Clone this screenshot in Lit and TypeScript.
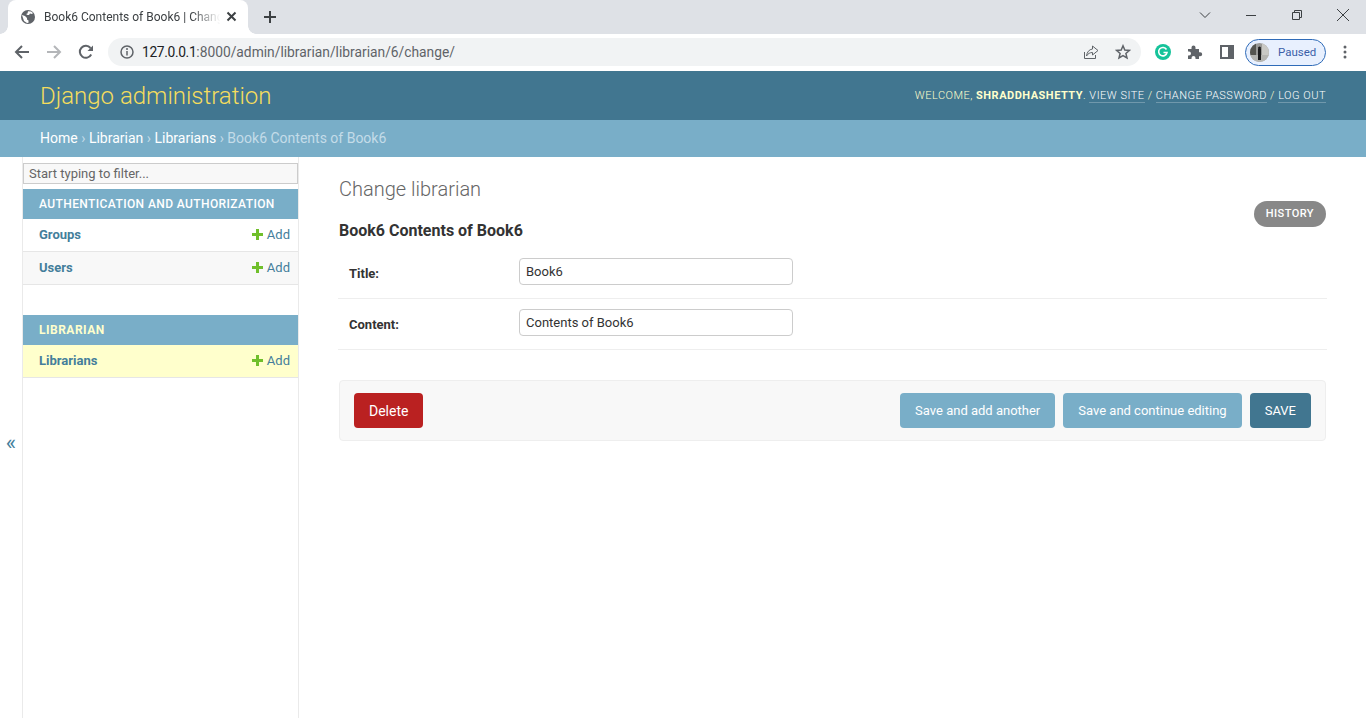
import { LitElement, html, css } from "lit";
import { customElement } from "lit/decorators.js";

@customElement("browser-chrome")
export class BrowserChrome extends LitElement {
  static styles = css`
    :host {
      display: block;
      font-family: Roboto, "Open Sans", sans-serif;
      color: #3c4043;
    }

    .tabs {
      height: 34px;
      background: #dee1e6;
      display: flex;
      align-items: flex-end;
    }

    .tab {
      position: relative;
      width: 240px;
      height: 34px;
      margin-left: 8px;
      box-sizing: border-box;
      background: #fff;
      border-radius: 8px 8px 0 0;
      display: flex;
      align-items: center;
      padding: 0 8px 1px 12px;
      font-size: 12px;
    }

    /* little flares at the foot of the active tab */
    .tab::before,
    .tab::after {
      content: "";
      position: absolute;
      bottom: 0;
      width: 8px;
      height: 8px;
    }

    .tab::before {
      left: -8px;
      background: radial-gradient(circle at 0 0, transparent 7.5px, #fff 8px);
    }

    .tab::after {
      right: -8px;
      background: radial-gradient(circle at 100% 0, transparent 7.5px, #fff 8px);
    }

    .tab svg {
      flex: none;
    }

    .tab-title {
      flex: 1;
      min-width: 0;
      margin-left: 8px;
      white-space: nowrap;
      overflow: hidden;
      -webkit-mask-image: linear-gradient(to right, #000 82%, transparent 98%);
      mask-image: linear-gradient(to right, #000 82%, transparent 98%);
    }

    .new-tab {
      margin: 0 0 1px 14px;
      height: 33px;
      display: flex;
      align-items: center;
    }

    .win {
      margin-left: auto;
      height: 34px;
      display: flex;
      align-items: center;
    }

    .win svg {
      display: block;
    }

    .win-btn {
      width: 46px;
      display: flex;
      justify-content: center;
      margin-bottom: 5px;
    }

    .toolbar {
      height: 37px;
      background: #fff;
      display: flex;
      align-items: center;
      padding: 0 0 1px 0;
      box-sizing: border-box;
    }

    .nav {
      width: 32px;
      display: flex;
      justify-content: center;
    }

    .nav:first-child {
      margin-left: 6px;
    }

    .omnibox {
      width: 1033px;
      height: 28px;
      margin-left: 6px;
      background: #f1f3f4;
      border-radius: 14px;
      display: flex;
      align-items: center;
      padding: 0 10px 0 11px;
      box-sizing: border-box;
      font-size: 13.8px;
      color: #5f6368;
    }

    .url {
      margin-left: 7px;
      flex: 1;
    }

    .url b {
      font-weight: 400;
      letter-spacing: -0.35px;
      color: #202124;
    }

    .omni-icon {
      margin-left: 16px;
      display: flex;
    }

    .ext {
      display: flex;
      margin-left: 14px;
    }

    .ext.next {
      margin-left: 16px;
    }

    .profile {
      margin-left: 10px;
      width: 81px;
      height: 27px;
      box-sizing: border-box;
      border: 1px solid #2f6bb8;
      border-radius: 14px;
      background: #e8f0fe;
      display: flex;
      align-items: center;
      padding-left: 4px;
      font-size: 11.5px;
      color: #3b5fa8;
    }

    .avatar {
      width: 19px;
      height: 19px;
      border-radius: 50%;
      flex: none;
      display: block;
      margin-right: 9px;
    }

    .menu {
      margin-left: 17px;
      display: flex;
    }
  `;

  render() {
    return html`
      <div class="tabs">
        <div class="tab">
          <svg width="16" height="16" viewBox="0 0 16 16">
            <circle cx="8" cy="8" r="7" fill="#5f6368" />
            <path
              d="M2 6l3 1 2 2v1.500l1.500 1v2.200L7 14 4 12l-1-3zM8 2.200l3 .3 2 1.500-1 1-2-.5-1 1.500H7.500L6 5l1.500-.5z"
              fill="#fff"
            />
          </svg>
          <span class="tab-title">Book6 Contents of Book6 | Change librarian</span>
          <svg width="16" height="16" viewBox="0 0 16 16">
            <path d="M3.500 3.500l8 8M11.500 3.500l-8 8" stroke="#3c4043" stroke-width="2" fill="none" />
          </svg>
        </div>
        <div class="new-tab">
          <svg width="16" height="16" viewBox="0 0 16 16">
            <path d="M8 2v12M2 8h12" stroke="#3c4043" stroke-width="2" fill="none" />
          </svg>
        </div>
        <div class="win">
          <div class="win-btn">
            <svg width="12" height="12" viewBox="0 0 12 12">
              <path d="M1 3.500l5 5 5-5" stroke="#3c4043" fill="none" />
            </svg>
          </div>
          <div class="win-btn">
            <svg width="12" height="12" viewBox="0 0 12 12">
              <path d="M1 6.500h10" stroke="#3c4043" fill="none" />
            </svg>
          </div>
          <div class="win-btn">
            <svg width="12" height="12" viewBox="0 0 12 12">
              <path d="M1.500 3.500h7v7h-7zM3.500 3.500v-2h7v7h-2" stroke="#3c4043" fill="none" />
            </svg>
          </div>
          <div class="win-btn">
            <svg width="14" height="14" viewBox="0 0 14 14">
              <path d="M1 1l12 12M13 1L1 13" stroke="#3c4043" fill="none" />
            </svg>
          </div>
        </div>
      </div>
      <div class="toolbar">
        <div class="nav">
          <svg width="16" height="16" viewBox="0 0 16 16">
            <path d="M15 8H2M8 2L2 8l6 6" stroke="#5f6368" stroke-width="2" fill="none" />
          </svg>
        </div>
        <div class="nav">
          <svg width="16" height="16" viewBox="0 0 16 16">
            <path d="M1 8h13M8 2l6 6-6 6" stroke="#b4b6b9" stroke-width="2" fill="none" />
          </svg>
        </div>
        <div class="nav">
          <svg width="16" height="16" viewBox="0 0 16 16">
            <path d="M13.200 10.500A6 6 0 1 1 12.500 4" stroke="#5f6368" stroke-width="2" fill="none" />
            <path d="M15 1.500V7H9.500z" fill="#5f6368" />
          </svg>
        </div>
        <div class="omnibox">
          <svg width="16" height="16" viewBox="0 0 16 16">
            <circle cx="8" cy="8" r="6" stroke="#5f6368" stroke-width="1.500" fill="none" />
            <path d="M8 7v4.500" stroke="#5f6368" stroke-width="1.500" />
            <circle cx="8" cy="5" r="1" fill="#5f6368" />
          </svg>
          <span class="url"><b>127.0.0.1</b>:8000/admin/librarian/librarian/6/change/</span>
          <span class="omni-icon">
            <svg width="16" height="16" viewBox="0 0 16 16">
              <path d="M1.500 8v6.500h11V11" stroke="#5f6368" fill="none" />
              <path d="M9.500 2l5.500 4.500-5.500 4.500V8.500C7 8.500 5 9.500 3.500 12c.5-4 2.500-6.500 6-7z" stroke="#5f6368" fill="none" />
            </svg>
          </span>
          <span class="omni-icon">
            <svg width="16" height="16" viewBox="0 0 16 16">
              <path
                d="M8 1.800l1.800 4.200 4.600.4-3.500 3 1.100 4.500L8 11.500l-4 2.400 1.100-4.500-3.500-3 4.600-.4z"
                stroke="#5f6368"
                stroke-width="1.500"
                fill="none"
              />
            </svg>
          </span>
        </div>
        <span class="ext">
          <svg width="16" height="16" viewBox="0 0 16 16">
            <circle cx="8" cy="8" r="8" fill="#15c39a" />
            <path d="M11.500 5.500A4.200 4.200 0 1 0 12 8.500H8.500" stroke="#fff" stroke-width="1.600" fill="none" />
          </svg>
        </span>
        <span class="ext next">
          <svg width="16" height="16" viewBox="0 0 16 16">
            <path
              d="M1 5h3.500V3.500a2 2 0 0 1 4 0V5H12v3.300h1.200a2 2 0 0 1 0 4H12V15H8.500v-1a2 2 0 0 0-4 0v1H1v-3.500h1a2 2 0 0 0 0-4H1z"
              fill="#5f6368"
            />
          </svg>
        </span>
        <span class="ext next">
          <svg width="16" height="16" viewBox="0 0 16 16">
            <path d="M2 2h12v12H2z" fill="none" stroke="#5f6368" stroke-width="2" />
            <path d="M9 2h5v12H9z" fill="#5f6368" />
          </svg>
        </span>
        <div class="profile">
          <svg class="avatar" viewBox="0 0 19 19">
            <rect width="19" height="19" fill="#9a9a97" />
            <rect x="12" width="7" height="19" fill="#c9c9c5" />
            <rect width="6" height="12" fill="#55554f" />
            <rect y="12" width="19" height="7" fill="#b5b5b1" />
            <circle cx="9.500" cy="5" r="1.500" fill="#1d1d1d" />
            <rect x="8" y="6" width="3" height="11" fill="#1d1d1d" />
          </svg>
          Paused
        </div>
        <span class="menu">
          <svg width="4" height="14" viewBox="0 0 4 14">
            <circle cx="2" cy="2" r="1.500" fill="#5f6368" />
            <circle cx="2" cy="7" r="1.500" fill="#5f6368" />
            <circle cx="2" cy="12" r="1.500" fill="#5f6368" />
          </svg>
        </span>
      </div>
    `;
  }
}

@customElement("app-root")
export class AppRoot extends LitElement {
  static styles = css`
    :host {
      display: block;
      height: 718px;
      overflow: hidden;
      background: #fff;
      font-family: Roboto, "Open Sans", sans-serif;
      font-size: 14px;
      color: #333;
    }

    a {
      text-decoration: none;
      color: inherit;
    }

    .header {
      height: 49px;
      background: #417690;
      display: flex;
      align-items: center;
      justify-content: space-between;
      padding: 0 40px;
    }

    .brand {
      font-size: 24px;
      font-weight: 300;
      color: #f5dd5d;
    }

    .tools {
      font-size: 11px;
      font-weight: 300;
      letter-spacing: 0.5px;
      color: #ffc;
      text-transform: uppercase;
      padding-bottom: 1px;
    }

    .tools strong {
      font-weight: 700;
    }

    .tools a {
      color: #fff;
      border-bottom: 1px solid rgba(255, 255, 255, 0.25);
    }

    .crumbs {
      height: 37px;
      box-sizing: border-box;
      background: #79aec8;
      padding: 0 40px 2px;
      display: flex;
      align-items: center;
      gap: 3.5px;
      color: #c4dce8;
      font-size: 14px;
      white-space: pre;
    }

    .crumbs a {
      color: #fff;
    }

    .main {
      display: flex;
      height: 561px;
    }

    .toggle {
      width: 23px;
      box-sizing: border-box;
      border-right: 1px solid #eaeaea;
      display: flex;
      align-items: center;
      justify-content: center;
      color: #447e9b;
      font-size: 22px;
      padding-top: 10px;
      flex: none;
    }

    .side {
      width: 276px;
      box-sizing: border-box;
      border-right: 1px solid #eaeaea;
      padding-top: 6px;
      flex: none;
    }

    .filter {
      display: block;
      width: 275px;
      height: 21px;
      box-sizing: border-box;
      border: 1px solid #ccc;
      background: #f8f8f8;
      padding: 0 5px;
      margin-bottom: 5px;
      font: 13px Roboto, sans-serif;
      line-height: 19px;
      color: #666;
    }

    .module {
      margin-bottom: 30px;
    }

    .caption {
      height: 30px;
      box-sizing: border-box;
      background: #79aec8;
      display: flex;
      align-items: center;
      padding: 0 16px 1px;
      font-size: 12px;
      font-weight: 500;
      letter-spacing: 0.4px;
      color: #fff;
      white-space: nowrap;
    }

    .caption.here {
      font-weight: 700;
      letter-spacing: 0.5px;
      color: #ffc;
    }

    .row {
      height: 33px;
      box-sizing: border-box;
      border-bottom: 1px solid #e6e6e6;
      display: flex;
      align-items: center;
      justify-content: space-between;
      padding: 0 8px 2px 16px;
      font-size: 13px;
      color: #447e9b;
    }

    .row.alt {
      background: #f8f8f8;
    }

    .row.current {
      background: #ffc;
    }

    .row strong {
      font-weight: 700;
    }

    .add {
      display: flex;
      align-items: center;
      gap: 4px;
    }

    .content {
      flex: 1;
      padding: 20px 40px 0;
      min-width: 0;
    }

    .heading {
      display: flex;
      justify-content: space-between;
      align-items: flex-start;
    }

    h1 {
      margin: 0;
      font-size: 20px;
      font-weight: 300;
      line-height: 24px;
      color: #666;
    }

    .history {
      margin-top: 24px;
      height: 26px;
      box-sizing: border-box;
      padding: 0 12px 2px 12px;
      border-radius: 13px;
      background: #888;
      color: #fff;
      font-size: 11px;
      font-weight: 500;
      letter-spacing: 0.45px;
      display: flex;
      align-items: center;
    }

    h2 {
      margin: -8px 0 0;
      font-size: 16px;
      line-height: 24px;
      font-weight: 700;
      color: #333;
    }

    .field {
      height: 51px;
      box-sizing: border-box;
      margin: 0 -1px;
      padding: 0 0 4px 11px;
      border-bottom: 1px solid #eee;
      display: flex;
      align-items: center;
    }

    .field label {
      width: 170px;
      font-size: 13px;
      font-weight: 700;
      padding-top: 4px;
    }

    .input {
      width: 274px;
      height: 27px;
      box-sizing: border-box;
      border: 1px solid #ccc;
      border-radius: 4px;
      padding: 0 6px;
      font-size: 13px;
      line-height: 25px;
      color: #333;
    }

    .first {
      margin-top: 5px;
    }

    .submit {
      margin-top: 30px;
      height: 61px;
      box-sizing: border-box;
      background: #f8f8f8;
      border: 1px solid #eee;
      border-radius: 4px;
      padding: 0 14px;
      display: flex;
      align-items: center;
      gap: 8px;
    }

    .btn {
      height: 35px;
      padding: 0 15px;
      border-radius: 4px;
      background: #79aec8;
      color: #fff;
      font-size: 13px;
      display: flex;
      align-items: center;
      box-sizing: border-box;
    }

    .btn.delete {
      background: #ba2121;
      font-size: 14px;
      margin-right: auto;
    }

    .btn.save {
      background: #417690;
    }
  `;

  private plus() {
    return html`<svg width="11" height="11" viewBox="0 0 11 11">
      <path d="M4 0h3v4h4v3H7v4H4V7H0V4h4z" fill="#70bf2b" />
    </svg>`;
  }

  private row(name: string, cls = "") {
    return html`<div class="row ${cls}">
      <a href="#"><strong>${name}</strong></a>
      <a class="add" href="#">${this.plus()}Add</a>
    </div>`;
  }

  render() {
    return html`
      <browser-chrome></browser-chrome>
      <div class="header">
        <a class="brand" href="#">Django administration</a>
        <div class="tools">
          Welcome, <strong>shraddhashetty</strong>. <a href="#">View site</a> /
          <a href="#">Change password</a> / <a href="#">Log out</a>
        </div>
      </div>
      <div class="crumbs">
        <a href="#">Home</a><span>›</span><a href="#">Librarian</a><span>›</span><a href="#">Librarians</a><span>›</span><span>Book6 Contents of Book6</span>
      </div>
      <div class="main">
        <div class="toggle">«</div>
        <div class="side">
          <div class="filter">Start typing to filter...</div>
          <div class="module">
            <div class="caption">AUTHENTICATION AND AUTHORIZATION</div>
            ${this.row("Groups")} ${this.row("Users", "alt")}
          </div>
          <div class="module">
            <div class="caption here">LIBRARIAN</div>
            ${this.row("Librarians", "current")}
          </div>
        </div>
        <div class="content">
          <div class="heading">
            <h1>Change librarian</h1>
            <a class="history" href="#">HISTORY</a>
          </div>
          <h2>Book6 Contents of Book6</h2>
          <div class="field first">
            <label>Title:</label>
            <div class="input">Book6</div>
          </div>
          <div class="field">
            <label>Content:</label>
            <div class="input">Contents of Book6</div>
          </div>
          <div class="submit">
            <a class="btn delete" href="#">Delete</a>
            <a class="btn" href="#">Save and add another</a>
            <a class="btn" href="#">Save and continue editing</a>
            <a class="btn save" href="#">SAVE</a>
          </div>
        </div>
      </div>
    `;
  }
}
